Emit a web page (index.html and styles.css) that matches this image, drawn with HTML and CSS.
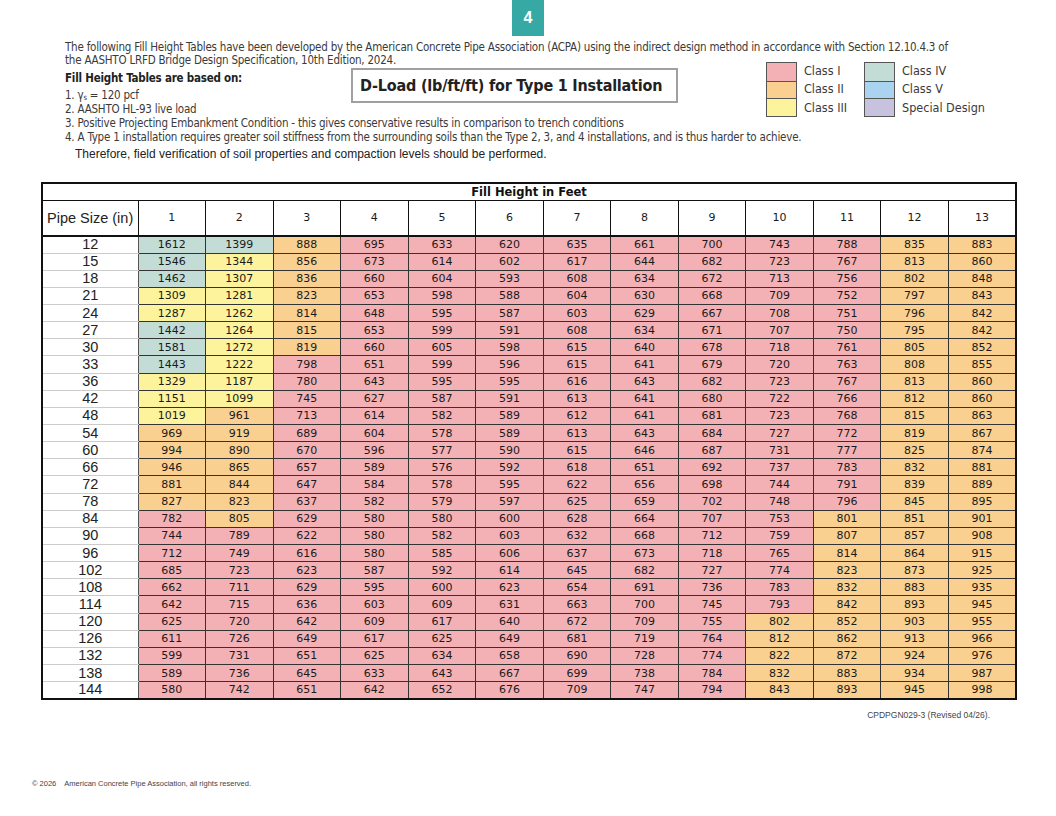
FILE: index.html
```html
<!DOCTYPE html>
<html lang="en">
<head>
  <meta charset="UTF-8" />
  <title>Fill Height Table - Type 1 Installation</title>
  <link rel="stylesheet" href="styles.css">
</head>
<body>
  <div class="page">
    <div class="badge">4</div>

    <header class="intro">
      <p class="lead">The following Fill Height Tables have been developed by the American Concrete Pipe Association (ACPA) using the indirect design method in accordance with Section 12.10.4.3 of<br>the AASHTO LRFD Bridge Design Specification, 10th Edition, 2024.</p>

      <div class="basis">
        <div class="basis-list">
          <p class="basis-title">Fill Height Tables are based on:</p>
          <p>1. &gamma;<sub>s</sub> = 120 pcf</p>
          <p>2. AASHTO HL-93 live load</p>
        </div>
        <div class="dload">D-Load (lb/ft/ft) for Type 1 Installation</div>
        <div class="legend">
          <div class="legend-group">
            <div class="swatches">
              <span class="sw c1"></span>
              <span class="sw c2"></span>
              <span class="sw c3"></span>
            </div>
            <div class="labels">
              <span>Class I</span>
              <span>Class II</span>
              <span>Class III</span>
            </div>
          </div>
          <div class="legend-group">
            <div class="swatches">
              <span class="sw c4"></span>
              <span class="sw c5"></span>
              <span class="sw c6"></span>
            </div>
            <div class="labels">
              <span>Class IV</span>
              <span>Class V</span>
              <span>Special Design</span>
            </div>
          </div>
        </div>
      </div>

      <p>3. Positive Projecting Embankment Condition - this gives conservative results in comparison to trench conditions</p>
      <p>4. A Type 1 installation requires greater soil stiffness from the surrounding soils than the Type 2, 3, and 4 installations, and is thus harder to achieve.</p>
      <p class="note">Therefore, field verification of soil properties and compaction levels should be performed.</p>
    </header>

    <div class="table-wrap">
      <table class="fh-table">
        <colgroup>
          <col class="size-col">
        </colgroup>
        <thead>
          <tr><th class="title" colspan="14">Fill Height in Feet</th></tr>
          <tr class="heights" id="heights"><th class="pipe-head">Pipe Size (in)</th></tr>
        </thead>
        <tbody id="rows"></tbody>
      </table>
    </div>

    <p class="doc-code">CPDPGN029-3 (Revised 04/26).</p>
    <p class="copyright"><span class="year">&copy; 2026</span>American Concrete Pipe Association, all rights reserved.</p>
  </div>

  <script>
    const data = [
      [12, 1612, 1399, 888, 695, 633, 620, 635, 661, 700, 743, 788, 835, 883],
      [15, 1546, 1344, 856, 673, 614, 602, 617, 644, 682, 723, 767, 813, 860],
      [18, 1462, 1307, 836, 660, 604, 593, 608, 634, 672, 713, 756, 802, 848],
      [21, 1309, 1281, 823, 653, 598, 588, 604, 630, 668, 709, 752, 797, 843],
      [24, 1287, 1262, 814, 648, 595, 587, 603, 629, 667, 708, 751, 796, 842],
      [27, 1442, 1264, 815, 653, 599, 591, 608, 634, 671, 707, 750, 795, 842],
      [30, 1581, 1272, 819, 660, 605, 598, 615, 640, 678, 718, 761, 805, 852],
      [33, 1443, 1222, 798, 651, 599, 596, 615, 641, 679, 720, 763, 808, 855],
      [36, 1329, 1187, 780, 643, 595, 595, 616, 643, 682, 723, 767, 813, 860],
      [42, 1151, 1099, 745, 627, 587, 591, 613, 641, 680, 722, 766, 812, 860],
      [48, 1019, 961, 713, 614, 582, 589, 612, 641, 681, 723, 768, 815, 863],
      [54, 969, 919, 689, 604, 578, 589, 613, 643, 684, 727, 772, 819, 867],
      [60, 994, 890, 670, 596, 577, 590, 615, 646, 687, 731, 777, 825, 874],
      [66, 946, 865, 657, 589, 576, 592, 618, 651, 692, 737, 783, 832, 881],
      [72, 881, 844, 647, 584, 578, 595, 622, 656, 698, 744, 791, 839, 889],
      [78, 827, 823, 637, 582, 579, 597, 625, 659, 702, 748, 796, 845, 895],
      [84, 782, 805, 629, 580, 580, 600, 628, 664, 707, 753, 801, 851, 901],
      [90, 744, 789, 622, 580, 582, 603, 632, 668, 712, 759, 807, 857, 908],
      [96, 712, 749, 616, 580, 585, 606, 637, 673, 718, 765, 814, 864, 915],
      [102, 685, 723, 623, 587, 592, 614, 645, 682, 727, 774, 823, 873, 925],
      [108, 662, 711, 629, 595, 600, 623, 654, 691, 736, 783, 832, 883, 935],
      [114, 642, 715, 636, 603, 609, 631, 663, 700, 745, 793, 842, 893, 945],
      [120, 625, 720, 642, 609, 617, 640, 672, 709, 755, 802, 852, 903, 955],
      [126, 611, 726, 649, 617, 625, 649, 681, 719, 764, 812, 862, 913, 966],
      [132, 599, 731, 651, 625, 634, 658, 690, 728, 774, 822, 872, 924, 976],
      [138, 589, 736, 645, 633, 643, 667, 699, 738, 784, 832, 883, 934, 987],
      [144, 580, 742, 651, 642, 652, 676, 709, 747, 794, 843, 893, 945, 998]
    ];

    // pipe class from D-load
    function pipeClass(v, col) {
      if (v > 1350) return 'c4';
      if (v > 1000) return 'c3';
      if (v > 800 || col >= 12) return 'c2';
      return 'c1';
    }

    const heights = document.getElementById('heights');
    for (let h = 1; h <= 13; h++) {
      const th = document.createElement('th');
      th.textContent = h;
      heights.appendChild(th);
    }

    const body = document.getElementById('rows');
    data.forEach(row => {
      const tr = document.createElement('tr');
      row.forEach((v, i) => {
        const td = document.createElement('td');
        td.textContent = v;
        td.className = i === 0 ? 'size' : pipeClass(v, i);
        tr.appendChild(td);
      });
      body.appendChild(tr);
    });
  </script>
</body>
</html>
```

FILE: styles.css
```css
:root {
  --teal: #37a9a4;
  --class-1: #f4b1b5;
  --class-2: #f9d08f;
  --class-3: #fdf39c;
  --class-4: #c3ddd6;
  --class-5: #a9d3ef;
  --class-6: #c7c3df;
  --text: #333;
  --grid: #333;
}

* {
  margin: 0;
  padding: 0;
  box-sizing: border-box;
}

body {
  background: #fff;
  color: var(--text);
  font-family: 'Liberation Sans', Arial, sans-serif;
}

.page {
  width: 1056px;
  height: 816px;
  overflow: hidden;
}

.badge {
  width: 32px;
  height: 36px;
  margin: 0 auto;
  background: var(--teal);
  color: #fff;
  font-weight: bold;
  font-size: 16px;
  display: flex;
  align-items: center;
  justify-content: center;
}

.intro {
  padding: 5px 0 0 65px;
  font-family: 'DejaVu Sans Condensed', Roboto, sans-serif;
  font-size: 11.5px;
  letter-spacing: -0.22px;
  line-height: 14px;
  color: #3a3a3a;
  white-space: nowrap;
}

.lead {
  line-height: 13px;
}

.basis {
  display: flex;
  align-items: flex-start;
  margin-top: 4px;
}

.basis-list {
  width: 286px;
  flex-shrink: 0;
}

.basis-title {
  font-weight: bold;
  color: #222;
  margin-bottom: 3px;
}

sub {
  font-size: 7.5px;
  line-height: 0;
  vertical-align: -1px;
}

.dload {
  flex-shrink: 0;
  margin-top: -3px;
  width: 327px;
  height: 35px;
  border: 2px solid #a0a0a0;
  padding-left: 7px;
  display: flex;
  align-items: center;
  font-size: 16px;
  letter-spacing: -0.2px;
  font-weight: bold;
  color: #222;
}

.legend {
  display: flex;
  margin-left: 88px;
  margin-top: -9px;
  margin-bottom: -4px;
}

.legend-group {
  display: flex;
}

.legend-group:first-child {
  width: 98px;
}

.swatches {
  flex-shrink: 0;
  display: flex;
  flex-direction: column;
  width: 31px;
  border: 1px solid #555;
}

.sw {
  display: block;
  height: 17.5px;
}

.sw + .sw {
  border-top: 1px solid #555;
}

.labels {
  display: flex;
  flex-direction: column;
  padding-left: 7px;
  font-size: 12.5px;
  letter-spacing: 0;
  line-height: 18.3px;
  color: #3a3a3a;
}

.note {
  margin-top: 3px;
  padding-left: 10px;
  font-family: 'Liberation Sans', Arial, sans-serif;
  font-size: 12px;
  letter-spacing: 0;
  color: #222;
}

.c1 { background: var(--class-1); }
.c2 { background: var(--class-2); }
.c3 { background: var(--class-3); }
.c4 { background: var(--class-4); }
.c5 { background: var(--class-5); }
.c6 { background: var(--class-6); }

.table-wrap {
  margin-top: 21px;
  padding-left: 41px;
}

.fh-table {
  width: 976px;
  table-layout: fixed;
  border-collapse: collapse;
  border: 2px solid #111;
  font-family: 'DejaVu Sans', Verdana, sans-serif;
  font-size: 11px;
  color: #1a1a1a;
}

.size-col {
  width: 96px;
}

.fh-table th {
  font-weight: normal;
  border: 1px solid #111;
}

.fh-table th.title {
  height: 17px;
  font-size: 11.5px;
  font-weight: bold;
  color: #111;
  border-bottom: 1px solid #111;
}

.heights th {
  height: 36px;
  border-bottom: 2px solid #111;
}

.fh-table th.pipe-head {
  text-align: left;
  padding-left: 4px;
  font-family: 'Liberation Sans', Arial, sans-serif;
  font-size: 14.5px;
  color: #222;
}

.fh-table td {
  height: 17.15px;
  padding: 0;
  text-align: center;
  border: 1px solid var(--grid);
  line-height: 15px;
}

.fh-table td.size {
  background: #fff;
  font-family: 'Liberation Sans', Arial, sans-serif;
  font-size: 14.5px;
  color: #222;
  border-top: 1px solid #ccc;
  border-bottom: 1px solid #ccc;
  border-left: none;
  border-right: 1px solid #555;
}

.doc-code {
  margin-top: 10px;
  padding-right: 66px;
  text-align: right;
  font-size: 8.5px;
  line-height: 10px;
  color: #444;
}

.copyright {
  margin-top: 59px;
  padding-left: 32px;
  font-size: 7.5px;
  line-height: 10px;
  color: #444;
}

.copyright .year {
  margin-right: 8px;
}
```
